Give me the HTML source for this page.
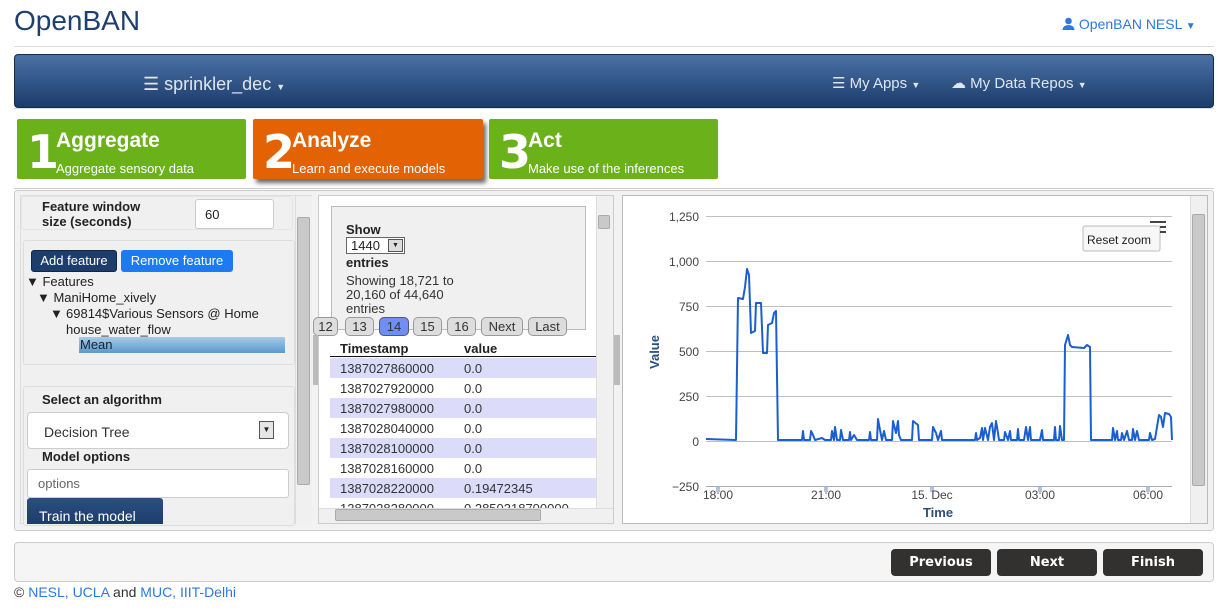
<!DOCTYPE html>
<html><head><meta charset="utf-8"><style>
*{box-sizing:border-box}
body{margin:0;width:1230px;height:611px;background:#fff;font-family:"Liberation Sans",sans-serif;position:relative;overflow:hidden;font-size:13px;color:#222}
.a{position:absolute}
.logo{left:14px;top:5px;font-size:28px;color:#1f3f6e;font-family:"Liberation Sans",sans-serif}
.user{left:1062px;top:16px;color:#2a7ae2;font-size:14px}
.hr{left:14px;width:1200px;height:1px;background:#ddd}
.nav{left:14px;top:54px;width:1200px;height:54px;border-radius:4px;background:linear-gradient(#4a71a6,#1c3d6b);border:1px solid #132b4e}
.nav span{position:absolute;color:#dfe6ef;font-size:15px}
.step{top:119px;height:60px;color:#fff;border-radius:2px}
.step b.n{position:absolute;left:10px;top:6px;font-size:46px;font-family:"DejaVu Sans","Liberation Sans",sans-serif;font-weight:bold}
.step .t{position:absolute;left:39px;top:10px;font-size:21px;font-weight:bold}
.step .s{position:absolute;left:39px;top:42px;font-size:13px}
.panel{left:14px;top:190px;width:1200px;height:341px;border:1px solid #ccc;border-radius:3px;background:#f2f2f2}
.box{border:1px solid #ddd;border-radius:3px;background:#f0f0f0}
.sb{background:#f0f0f0;border-left:1px solid #ddd}
.thumb{background:#c9c9c9;border:1px solid #aaa;border-radius:2px}
.row{position:absolute;left:330px;width:266px;height:20px;font-size:13px;color:#333}
.row span{position:absolute;top:3px}
.pg{position:absolute;top:317px;height:19px;border:1px solid #999;border-radius:5px;background:#ddd;font-size:13px;text-align:center;line-height:17px;color:#333}
.btn{top:549px;width:100px;height:27px;background:#333030;border-radius:4px;color:#fff;font-weight:bold;font-size:13px;text-align:center;line-height:27px;font-family:"DejaVu Sans",sans-serif}
</style></head><body>
<div class="a logo">OpenBAN</div>
<div class="a user"><svg width="13" height="13" viewBox="0 0 13 13" style="vertical-align:-1px"><circle cx="6.5" cy="4" r="3.3" fill="#2a7ae2"/><path d="M0.5 13 Q1 8 6.5 8 Q12 8 12.5 13Z" fill="#2a7ae2"/></svg> OpenBAN NESL <span style="font-size:10px">▼</span></div>
<div class="a hr" style="top:46px"></div>
<div class="a nav">
<span style="left:128px;top:19px;font-size:18px">☰ sprinkler_dec <small style="font-size:9px">▼</small></span>
<span style="left:817px;top:19px">☰ My Apps <small style="font-size:9px">▼</small></span>
<span style="left:936px;top:19px">☁ My Data Repos <small style="font-size:9px">▼</small></span>
</div>
<div class="a hr" style="top:108px"></div>
<div class="a step" style="left:17px;width:229px;background:#6ab11a"><b class="n">1</b><span class="t">Aggregate</span><span class="s">Aggregate sensory data</span></div>
<div class="a step" style="left:253px;width:230px;background:#e36304;box-shadow:3px 4px 5px #666"><b class="n">2</b><span class="t">Analyze</span><span class="s">Learn and execute models</span></div>
<div class="a step" style="left:489px;width:229px;background:#6ab11a"><b class="n">3</b><span class="t">Act</span><span class="s">Make use of the inferences</span></div>
<div class="a hr" style="top:188px;background:#ccc"></div>
<div class="a panel"></div>
<div class="a" style="left:20px;top:195px;width:292px;height:329px;background:#f0f0f0;border:1px solid #ddd"></div>
<div class="a box" style="left:21px;top:196px;width:272px;height:34px;border-color:#e4e4e4"></div>
<div class="a" style="left:42px;top:199px;font-weight:bold;font-size:13px;line-height:15px">Feature window<br>size (seconds)</div>
<div class="a" style="left:195px;top:199px;width:79px;height:30px;background:#fff;border:1px solid #ccc;border-radius:3px;padding:7px 9px;font-size:13px">60</div>
<div class="a box" style="left:23px;top:240px;width:272px;height:125px"></div>
<div class="a" style="left:31px;top:250px;width:86px;height:22px;background:#1d3e6d;border:1px solid #102848;border-radius:3px;color:#fff;font-size:13px;line-height:20px;text-align:center">Add feature</div>
<div class="a" style="left:121px;top:250px;width:112px;height:22px;background:#1d7af0;border-radius:3px;color:#fff;font-size:13px;line-height:21px;text-align:center">Remove feature</div>
<div class="a" style="left:26px;top:274px;font-size:13px;line-height:16px">▼ Features</div>
<div class="a" style="left:37px;top:290px;font-size:13px">▼ ManiHome_xively</div>
<div class="a" style="left:50px;top:306px;font-size:13px;line-height:16px">▼</div>
<div class="a" style="left:66px;top:306px;font-size:13px;line-height:16px">69814$Various Sensors @ Home<br>house_water_flow</div>
<div class="a" style="left:79px;top:337px;width:206px;height:16px;background:linear-gradient(#a5cbe8,#5c98c9);font-size:13px;color:#123;padding-left:1px">Mean</div>
<div class="a box" style="left:23px;top:386px;width:272px;height:140px"></div>
<div class="a" style="left:42px;top:392px;font-weight:bold">Select an algorithm</div>
<div class="a" style="left:27px;top:412px;width:262px;height:37px;background:#fff;border:1px solid #ccc;border-radius:4px;padding:11px 16px;font-size:14px;color:#333">Decision Tree</div>
<div class="a" style="left:259px;top:421px;width:15px;height:18px;border:1px solid #555;background:#e6e6e6;font-size:8px;text-align:center;line-height:16px">▼</div>
<div class="a" style="left:42px;top:449px;font-weight:bold">Model options</div>
<div class="a" style="left:27px;top:469px;width:262px;height:29px;background:#fff;border:1px solid #ccc;border-radius:3px;padding:6px 10px;color:#666;font-size:13px">options</div>
<div class="a" style="left:27px;top:498px;width:136px;height:26px;background:linear-gradient(#2b4f82,#1c3d6c);border-radius:3px 3px 0 0;color:#fff;font-size:14px;padding:10px 0 0 12px;overflow:hidden">Train the model</div>
<div class="a sb" style="left:295px;top:196px;width:17px;height:328px"></div>
<div class="a thumb" style="left:297px;top:217px;width:13px;height:268px"></div>
<div class="a" style="left:318px;top:195px;width:296px;height:329px;background:#fff;border:1px solid #ccc"></div>
<div class="a" style="left:331px;top:206px;width:255px;height:124px;background:#f0f0f0;border:1px solid #bbb"></div>
<div class="a" style="left:346px;top:222px;font-weight:bold;font-size:13px">Show</div>
<div class="a" style="left:346px;top:237px;width:59px;height:17px;border:1px solid #666;background:#fff;font-size:13px;padding-left:4px;line-height:15px">1440</div>
<div class="a" style="left:388px;top:239px;width:15px;height:13px;border:1px solid #555;background:#ddd;font-size:7px;text-align:center;line-height:12px">▼</div>
<div class="a" style="left:346px;top:255px;font-weight:bold">entries</div>
<div class="a" style="left:346px;top:274px;font-size:13px;line-height:14px;color:#333">Showing 18,721 to<br>20,160 of 44,640<br>entries</div>
<div class="pg" style="left:313px;width:25px">12</div>
<div class="pg" style="left:345px;width:29px">13</div>
<div class="pg" style="left:379px;width:30px;background:#6e8ff5;border-color:#557">14</div>
<div class="pg" style="left:413px;width:29px">15</div>
<div class="pg" style="left:447px;width:29px">16</div>
<div class="pg" style="left:481px;width:42px">Next</div>
<div class="pg" style="left:528px;width:39px">Last</div>
<div class="a" style="left:340px;top:341px;font-weight:bold">Timestamp</div>
<div class="a" style="left:464px;top:341px;font-weight:bold">value</div>
<div class="a" style="left:330px;top:356px;width:266px;height:1px;background:#111"></div>
<div class="row" style="top:358px;background:#dcdcfa"><span style="left:10px">1387027860000</span><span style="left:134px">0.0</span></div>
<div class="row" style="top:378px"><span style="left:10px">1387027920000</span><span style="left:134px">0.0</span></div>
<div class="row" style="top:398px;background:#dcdcfa"><span style="left:10px">1387027980000</span><span style="left:134px">0.0</span></div>
<div class="row" style="top:418px"><span style="left:10px">1387028040000</span><span style="left:134px">0.0</span></div>
<div class="row" style="top:438px;background:#dcdcfa"><span style="left:10px">1387028100000</span><span style="left:134px">0.0</span></div>
<div class="row" style="top:458px"><span style="left:10px">1387028160000</span><span style="left:134px">0.0</span></div>
<div class="row" style="top:478px;background:#dcdcfa"><span style="left:10px">1387028220000</span><span style="left:134px">0.19472345</span></div>
<div class="row" style="top:498px;overflow:hidden;height:10px"><span style="left:10px">1387028280000</span><span style="left:134px">0.2850318700000</span></div>
<div class="a sb" style="left:596px;top:196px;width:17px;height:312px"></div>
<div class="a thumb" style="left:598px;top:215px;width:12px;height:14px"></div>
<div class="a" style="left:319px;top:508px;width:294px;height:15px;background:#f0f0f0;border-top:1px solid #ddd"></div>
<div class="a thumb" style="left:335px;top:509px;width:206px;height:12px"></div>
<div class="a" style="left:313px;top:335px;width:5px;height:50px;background:#bbb"></div>
<div class="a" style="left:614px;top:335px;width:6px;height:50px;background:#bbb"></div>
<div class="a" style="left:622px;top:195px;width:586px;height:329px;background:#fff;border:1px solid #bbb"></div>
<div class="a sb" style="left:1190px;top:196px;width:17px;height:327px"></div>
<div class="a thumb" style="left:1192px;top:214px;width:13px;height:272px"></div>
<svg class="a" style="left:622px;top:195px" width="570" height="329" font-family="Liberation Sans" font-size="12" fill="#444">
<g stroke="#c0c0c0" stroke-width="1">
<line x1="84" x2="550" y1="21.5" y2="21.5"/><line x1="84" x2="550" y1="66.5" y2="66.5"/><line x1="84" x2="550" y1="111.5" y2="111.5"/><line x1="84" x2="550" y1="156.5" y2="156.5"/><line x1="84" x2="550" y1="201.5" y2="201.5"/><line x1="84" x2="550" y1="246.5" y2="246.5"/><line x1="84" x2="550" y1="291.5" y2="291.5" stroke="#aab"/>
</g>
<g text-anchor="end"><text x="77" y="26">1,250</text><text x="77" y="71">1,000</text><text x="77" y="116">750</text><text x="77" y="161">500</text><text x="77" y="206">250</text><text x="77" y="251">0</text><text x="77" y="296">−250</text></g>
<g fill="#b0c4de"><rect x="94" y="292" width="4" height="5"/><rect x="202" y="292" width="4" height="5"/><rect x="308" y="292" width="4" height="5"/><rect x="416" y="292" width="4" height="5"/><rect x="524" y="292" width="4" height="5"/></g>
<g text-anchor="middle"><text x="96" y="304">18:00</text><text x="204" y="304">21:00</text><text x="310" y="304">15. Dec</text><text x="418" y="304">03:00</text><text x="526" y="304">06:00</text></g>
<text x="316" y="322" text-anchor="middle" font-weight="bold" font-size="13" fill="#2b4f7e">Time</text>
<text transform="translate(37,157) rotate(-90)" text-anchor="middle" font-weight="bold" font-size="13" fill="#2b4f7e">Value</text>
<path fill="none" stroke="#1a5fd0" stroke-width="2" stroke-linejoin="round" d="M84,244 L114,245 L116,103 L121,104 L123,92 L125,74 L127,80 L129,138 L133,136 L134,108 L139,108 L141,158 L145,158 L146,130 L150,128 L152,118 L154,116 L156,245 L180,245 L181,236 L182,245 L188,245 L189,236 L191,240 L193,245 L200,243 L203,245 L209,245 L210,236 L212,245 L213,232 L215,245 L218,245 L219,235 L221,245 L227,245 L228,237 L229,245 L232,240 L235,245 L247,245 L248,237 L249,245 L255,245 L256,224 L258,235 L260,245 L262,236 L264,245 L270,245 L271,226 L274,238 L276,226 L277,240 L279,245 L290,245 L291,226 L296,230 L297,245 L310,245 L311,232 L314,238 L316,245 L319,236 L320,245 L330,245 L348,245 L353,245 L354,238 L355,245 L358,243 L360,233 L361,245 L363,233 L366,245 L368,232 L370,228 L372,245 L374,226 L376,238 L377,245 L382,245 L383,237 L386,245 L388,236 L389,245 L395,245 L396,234 L397,245 L402,245 L404,232 L406,245 L408,232 L409,245 L418,245 L420,235 L421,245 L432,245 L433,232 L434,245 L437,245 L438,231 L440,245 L442,245 L443,150 L446,140 L448,150 L450,152 L462,153 L465,150 L468,152 L469,245 L490,245 L491,233 L493,245 L495,236 L496,245 L499,245 L500,238 L502,245 L505,236 L507,245 L510,245 L511,234 L513,245 L515,236 L517,245 L527,245 L528,238 L530,245 L533,244 L535,232 L537,220 L539,222 L541,232 L543,218 L547,219 L549,222 L550,245"/>
<rect x="461" y="31" width="77" height="25" rx="2" fill="#f7f7f7" stroke="#bbb"/>
<text x="465" y="49" font-size="12" fill="#222">Reset zoom</text>
<g stroke="#444" stroke-width="2"><line x1="528" x2="544" y1="27" y2="27"/><line x1="538" x2="544" y1="32" y2="32"/><line x1="538" x2="544" y1="37" y2="37"/></g>
</svg>
<div class="a" style="left:14px;top:542px;width:1200px;height:40px;border:1px solid #ccc;border-radius:4px;background:#f5f5f5"></div>
<div class="a btn" style="left:891px">Previous</div>
<div class="a btn" style="left:997px">Next</div>
<div class="a btn" style="left:1103px">Finish</div>
<div class="a" style="left:14px;top:584px;font-size:14px;color:#333">© <span style="color:#2a7ae2">NESL, UCLA</span> and <span style="color:#2a7ae2">MUC, IIIT-Delhi</span></div>
</body></html>
